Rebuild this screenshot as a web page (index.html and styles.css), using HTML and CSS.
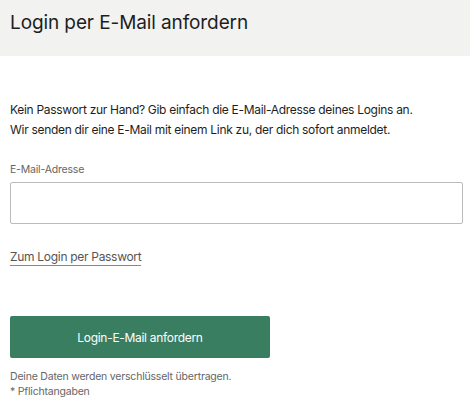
FILE: index.html
```html
<!DOCTYPE html>
<html lang="de">
<head>
<meta charset="utf-8">
<link rel="stylesheet" href="styles.css">
</head>
<body>
<header class="header">
  <h1 class="title">Login per E-Mail anfordern</h1>
</header>
<main class="content">
  <p class="intro">Kein Passwort zur Hand? Gib einfach die E-Mail-Adresse deines Logins an.<br>Wir senden dir eine E-Mail mit einem Link zu, der dich sofort anmeldet.</p>
  <label class="label" for="email">E-Mail-Adresse</label>
  <input class="input" id="email" type="email">
  <a class="link" href="#">Zum Login per Passwort</a>
  <button class="button" type="button">Login-E-Mail anfordern</button>
  <p class="note">Deine Daten werden verschlüsselt übertragen.<br>* Pflichtangaben</p>
</main>
</body>
</html>
```
FILE: styles.css
```css
* { box-sizing: border-box; }
html, body { margin: 0; padding: 0; background: #fff; }
body {
  font-family: Inter, "Liberation Sans", Arial, sans-serif;
  color: #222;
  width: 470px;
}
.header {
  background: #f2f2f1;
  height: 56px;
  padding: 11px 10px 0;
}
.title {
  margin: 0;
  font-size: 19px;
  font-weight: 400;
  letter-spacing: -0.1px;
  line-height: 24px;
  color: #1e1e1e;
}
.content {
  display: flex;
  flex-direction: column;
  align-items: flex-start;
  padding: 0 8px 0 10px;
}
.intro {
  margin: 44px 0 0;
  font-size: 12px;
  letter-spacing: -0.3px;
  line-height: 20px;
  color: #1e1e1e;
}
.label {
  margin-top: 23px;
  font-size: 10.5px;
  letter-spacing: -0.2px;
  line-height: 14px;
  color: #666;
}
.input {
  margin-top: 5px;
  width: 453px;
  height: 42px;
  border: 1px solid #bbb;
  border-radius: 2px;
  background: #fff;
}
.link {
  margin-top: 24px;
  font-size: 12px;
  letter-spacing: -0.3px;
  line-height: 17px;
  color: #555;
  text-decoration: none;
  border-bottom: 1px solid #888;
}
.button {
  margin-top: 50px;
  width: 260px;
  height: 42px;
  border: none;
  border-radius: 2px;
  background: #3a7e62;
  color: #fff;
  font-family: inherit;
  font-size: 12px;
  letter-spacing: -0.3px;
}
.note {
  margin: 11px 0 0;
  font-size: 10.5px;
  letter-spacing: -0.2px;
  line-height: 15px;
  color: #666;
}
```
